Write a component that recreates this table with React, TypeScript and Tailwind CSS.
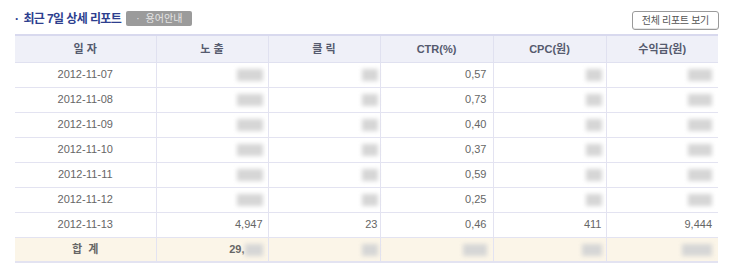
import React from 'react';

type Row = {
  date: string;
  imp?: string;
  click?: string;
  ctr: string;
  cpc?: string;
  rev?: string;
};

const rows: Row[] = [
  { date: '2012-11-07', ctr: '0,57' },
  { date: '2012-11-08', ctr: '0,73' },
  { date: '2012-11-09', ctr: '0,40' },
  { date: '2012-11-10', ctr: '0,37' },
  { date: '2012-11-11', ctr: '0,59' },
  { date: '2012-11-12', ctr: '0,25' },
  { date: '2012-11-13', imp: '4,947', click: '23', ctr: '0,46', cpc: '411', rev: '9,444' },
];

const font = { fontFamily: '"Liberation Sans", "Noto Sans CJK KR", sans-serif' };

function Mosaic({ w }: { w: string }) {
  return <span className={`inline-block h-[12px] align-middle bg-[#d6d6d6] blur-[2px] ${w}`} />;
}

const cell = 'h-[25px] border-b border-l border-[#e3e3f1] text-[11px] text-[#666] first:border-l-0';

export default function App() {
  return (
    <div className="w-[730px] h-[271px] bg-white pl-[15px] pr-[12px] pt-[8px]" style={font}>
      <div className="flex items-center justify-between h-[21px]">
        <div className="flex items-center gap-[5px]">
          <span className="text-[12px] font-bold text-[#2e3f8f] tracking-[-0.6px]">
            <span className="mr-[5px]">·</span>최근 7일 상세 리포트
          </span>
          <span className="flex items-center h-[15px] px-[10px] bg-[#9b9b9b] rounded-[2px] text-[10px] text-[#e6e6e6]">
            <span className="mr-[6px]">·</span>용어안내
          </span>
        </div>
        <button className="h-[19px] px-[9px] mt-[4px] mr-[-1px] border border-[#9a9a9a] rounded-[3px] bg-white text-[10px] text-[#555] tracking-[-0.3px] shadow-[inset_0_-1px_0_#e5e5e5]">
          전체 리포트 보기
        </button>
      </div>

      <table className="mt-[5px] w-[703px] border-collapse table-fixed">
        <colgroup>
          <col className="w-[141px]" />
          <col className="w-[112px]" />
          <col className="w-[112px]" />
          <col className="w-[113px]" />
          <col className="w-[113px]" />
          <col className="w-[112px]" />
        </colgroup>
        <thead>
          <tr className="h-[27px] bg-[#eff0f8] border-t-2 border-[#d8d9ee]">
            {['일 자', '노 출', '클 릭', 'CTR(%)', 'CPC(원)', '수익금(원)'].map((h, i) => (
              <th
                key={h}
                className={`text-[11px] font-bold text-[#555a6e] whitespace-pre border-b border-[#e0e1f0] ${i ? 'border-l' : ''}`}
              >
                {h}
              </th>
            ))}
          </tr>
        </thead>
        <tbody>
          {rows.map((r) => (
            <tr key={r.date}>
              <td className={`${cell} text-center`}>{r.date}</td>
              <td className={`${cell} text-right pr-[5px]`}>{r.imp ?? <Mosaic w="w-[26px]" />}</td>
              <td className={`${cell} text-right pr-[2px]`}>{r.click ?? <Mosaic w="w-[16px]" />}</td>
              <td className={`${cell} text-right pr-[6px]`}>{r.ctr}</td>
              <td className={`${cell} text-right pr-[4px]`}>{r.cpc ?? <Mosaic w="w-[16px]" />}</td>
              <td className={`${cell} text-right pr-[6px]`}>{r.rev ?? <Mosaic w="w-[24px]" />}</td>
            </tr>
          ))}
          <tr className="bg-[#fbf5e8]">
            <td className={`${cell} text-center font-bold text-[#444] whitespace-pre border-b-2`}>합  계</td>
            <td className={`${cell} text-right pr-[5px] font-bold text-[#555] border-b-2`}>
              29,<Mosaic w="w-[18px]" />
            </td>
            <td className={`${cell} text-right pr-[2px] border-b-2`}><Mosaic w="w-[16px]" /></td>
            <td className={`${cell} text-right pr-[6px] border-b-2`}><Mosaic w="w-[24px]" /></td>
            <td className={`${cell} text-right pr-[4px] border-b-2`}><Mosaic w="w-[20px]" /></td>
            <td className={`${cell} text-right pr-[6px] border-b-2`}><Mosaic w="w-[30px]" /></td>
          </tr>
        </tbody>
      </table>
    </div>
  );
}
